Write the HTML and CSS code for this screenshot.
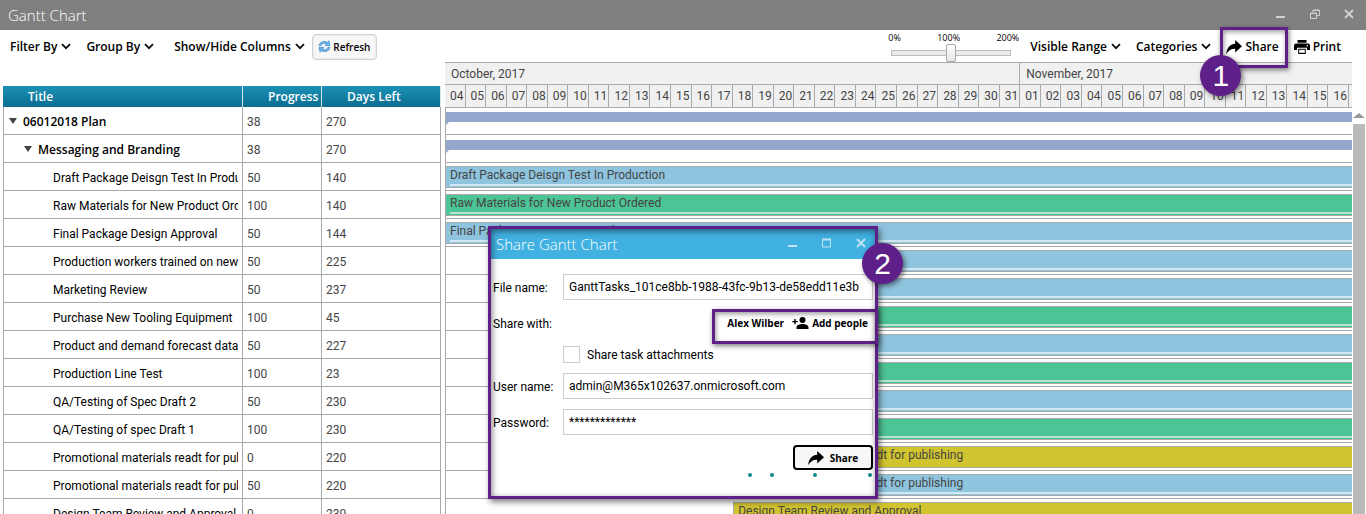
FILE: index.html
```
<!DOCTYPE html>
<html lang="en">
<head>
<meta charset="utf-8">
<title>Gantt Chart</title>
<link rel="stylesheet" href="styles.css">
</head>
<body>
<svg class="defs" aria-hidden="true">
  <symbol id="chevron" viewBox="0 0 10 7"><path d="M1 1.2l4 4 4-4" fill="none" stroke="#111" stroke-width="1.9"/></symbol>
  <symbol id="share" viewBox="0 0 16 14"><path d="M9.2 0L16 6.2 9.2 12.4V8.8C5.6 8.600 2.600 10.200 0.200 14 0.600 8.500 3.500 4.200 9.200 3.700z" fill="#000"/></symbol>
  <symbol id="close" viewBox="0 0 10 10"><path d="M1 1l8 8M9 1l-8 8" fill="none" stroke="currentColor" stroke-width="1.8"/></symbol>
</svg>
<div class="app">
  <header class="titlebar">
    <h1 class="window-title">Gantt Chart</h1>
    <div class="window-buttons">
      <button aria-label="Minimize"><svg width="10" height="10" viewBox="0 0 10 10"><path d="M0 8h9" stroke="currentColor" stroke-width="2"/></svg></button>
      <button aria-label="Restore"><svg width="10" height="10" viewBox="0 0 10 10"><path d="M3 3V1h6.500v5.500H7M.5 4h6v5.500h-6zM.5 4.500h6M3 1.500h6.500" fill="none" stroke="currentColor"/></svg></button>
      <button aria-label="Close"><svg width="10" height="10"><use href="#close"/></svg></button>
    </div>
  </header>

  <nav class="toolbar">
    <div class="tools tools-left">
      <button class="menu">Filter By <svg width="10" height="7"><use href="#chevron"/></svg></button>
      <button class="menu">Group By <svg width="10" height="7"><use href="#chevron"/></svg></button>
      <button class="menu menu-wide">Show/Hide Columns <svg width="10" height="7"><use href="#chevron"/></svg></button>
      <button class="refresh"><svg width="13" height="13" viewBox="0 0 13 13"><path d="M1 5.500C1.500 2 6 .2 9.300 2.300L11 .8l1 5-5-.3 1.600-1.500C6.500 2.600 4 3.200 3.200 5.500z" fill="#6db4ea" stroke="#2f7cc4" stroke-width=".6"/><path d="M12 7.500C11.500 11 7 12.800 3.700 10.700L2 12.200l-1-5 5 .3L4.400 9c2.100 1.400 4.600.8 5.400-1.500z" fill="#6db4ea" stroke="#2f7cc4" stroke-width=".6"/></svg>Refresh</button>
    </div>
    <div class="tools tools-right">
      <div class="zoom">
        <div class="zoom-labels"><span>0%</span><label for="zoom">100%</label><span>200%</span></div>
        <input class="zoom-range" id="zoom" type="range" min="0" max="200" value="100">
      </div>
      <button class="menu">Visible Range <svg width="10" height="7"><use href="#chevron"/></svg></button>
      <button class="menu">Categories <svg width="10" height="7"><use href="#chevron"/></svg></button>
      <button class="action"><svg width="16" height="14"><use href="#share"/></svg>Share<span class="callout callout-share"></span><span class="badge badge-one">1</span></button>
      <button class="action"><svg width="16" height="14" viewBox="0 0 16 14"><path d="M3.500 0h9v2.800h-9zM2 3.600h12a2 2 0 0 1 2 2V10h-3V7.800H3V10H0V5.600a2 2 0 0 1 2-2zM4.200 8.800h7.600V14H4.200z"/><circle cx="13.300" cy="5.700" r=".8" fill="#fff"/><path d="M5.200 9.800h5.600v3H5.200z" fill="#fff"/></svg>Print</button>
    </div>
  </nav>

  <main class="workspace">
    <section class="task-pane">
      <table class="tasks">
        <colgroup><col class="col-title"><col class="col-progress"><col></colgroup>
        <thead><tr><th>Title</th><th>Progress</th><th>Days Left</th></tr></thead>
        <tbody>
          <tr><td class="group"><div class="cell"><span class="caret"></span>06012018 Plan</div></td><td>38</td><td>270</td></tr>
          <tr><td class="group level-1"><div class="cell"><span class="caret"></span>Messaging and Branding</div></td><td>38</td><td>270</td></tr>
          <tr><td class="level-2"><div class="cell">Draft Package Deisgn Test In Production</div></td><td>50</td><td>140</td></tr>
          <tr><td class="level-2"><div class="cell">Raw Materials for New Product Ordered</div></td><td>100</td><td>140</td></tr>
          <tr><td class="level-2"><div class="cell">Final Package Design Approval</div></td><td>50</td><td>144</td></tr>
          <tr><td class="level-2"><div class="cell">Production workers trained on new tooling</div></td><td>50</td><td>225</td></tr>
          <tr><td class="level-2"><div class="cell">Marketing Review</div></td><td>50</td><td>237</td></tr>
          <tr><td class="level-2"><div class="cell">Purchase New Tooling Equipment</div></td><td>100</td><td>45</td></tr>
          <tr><td class="level-2"><div class="cell">Product and demand forecast data</div></td><td>50</td><td>227</td></tr>
          <tr><td class="level-2"><div class="cell">Production Line Test</div></td><td>100</td><td>23</td></tr>
          <tr><td class="level-2"><div class="cell">QA/Testing of Spec Draft 2</div></td><td>50</td><td>230</td></tr>
          <tr><td class="level-2"><div class="cell">QA/Testing of spec Draft 1</div></td><td>100</td><td>230</td></tr>
          <tr><td class="level-2"><div class="cell">Promotional materials readt for publishing</div></td><td>0</td><td>220</td></tr>
          <tr><td class="level-2"><div class="cell">Promotional materials readt for publishing</div></td><td>50</td><td>220</td></tr>
          <tr><td class="level-2"><div class="cell">Design Team Review and Approval</div></td><td>0</td><td>230</td></tr>
        </tbody>
      </table>
    </section>

    <section class="timeline">
      <div class="scale">
        <div class="month month-oct">October, 2017</div><div class="month month-nov">November, 2017</div>
        <span class="day">04</span><span class="day">05</span><span class="day">06</span><span class="day">07</span><span class="day">08</span><span class="day">09</span><span class="day">10</span><span class="day">11</span><span class="day">12</span><span class="day">13</span><span class="day">14</span><span class="day">15</span><span class="day">16</span><span class="day">17</span><span class="day">18</span><span class="day">19</span><span class="day">20</span><span class="day">21</span><span class="day">22</span><span class="day">23</span><span class="day">24</span><span class="day">25</span><span class="day">26</span><span class="day">27</span><span class="day">28</span><span class="day">29</span><span class="day">30</span><span class="day">31</span><span class="day">01</span><span class="day">02</span><span class="day">03</span><span class="day">04</span><span class="day">05</span><span class="day">06</span><span class="day">07</span><span class="day">08</span><span class="day">09</span><span class="day">10</span><span class="day">11</span><span class="day">12</span><span class="day">13</span><span class="day">14</span><span class="day">15</span><span class="day">16</span><span class="day day-cut"></span>
      </div>
      <div class="lanes">
        <div class="lane"><div class="summary"></div></div>
        <div class="lane"><div class="summary"></div></div>
        <div class="lane"><div class="bar blue">Draft Package Deisgn Test In Production</div></div>
        <div class="lane"><div class="bar green">Raw Materials for New Product Ordered</div></div>
        <div class="lane"><div class="bar blue">Final Package Design Approval</div></div>
        <div class="lane"><div class="bar blue" style="margin-left:12%">Production workers trained on new tooling</div></div>
        <div class="lane"><div class="bar blue" style="margin-left:12%">Marketing Review</div></div>
        <div class="lane"><div class="bar green" style="margin-left:12%">Purchase New Tooling Equipment</div></div>
        <div class="lane"><div class="bar blue" style="margin-left:12%">Product and demand forecast data</div></div>
        <div class="lane"><div class="bar green" style="margin-left:12%">Production Line Test</div></div>
        <div class="lane"><div class="bar blue" style="margin-left:12%">QA/Testing of Spec Draft 2</div></div>
        <div class="lane"><div class="bar green" style="margin-left:12%">QA/Testing of spec Draft 1</div></div>
        <div class="lane"><div class="bar yellow" style="margin-left:31.700%">Promotional materials readt for publishing</div></div>
        <div class="lane"><div class="bar blue" style="margin-left:31.700%">Promotional materials readt for publishing</div></div>
        <div class="lane"><div class="bar yellow" style="margin-left:31.700%">Design Team Review and Approval</div></div>
      </div>
    </section>
    <div class="scrollbar"><span class="scroll-up"></span><span class="scroll-thumb"></span></div>
  </main>

  <div class="dialog" role="dialog" aria-labelledby="dialog-title">
    <header class="dialog-head">
      <h2 class="dialog-title" id="dialog-title">Share Gantt Chart</h2>
      <div class="dialog-buttons">
        <button aria-label="Minimize"><svg width="10" height="10" viewBox="0 0 10 10"><path d="M0 8h9" stroke="currentColor" stroke-width="2"/></svg></button>
        <button aria-label="Maximize"><svg width="10" height="10" viewBox="0 0 10 10"><path d="M.5 1.500h8v7.500h-8z" fill="none" stroke="currentColor"/><path d="M0 1.500h9" stroke="currentColor" stroke-width="2"/></svg></button>
        <button aria-label="Close"><svg width="10" height="10"><use href="#close"/></svg></button>
      </div>
    </header>
    <form class="share-form">
      <label class="caption" for="file">File name:</label>
      <input class="field" id="file" type="text" value="GanttTasks_101ce8bb-1988-43fc-9b13-de58edd11e3b">
      <span class="caption">Share with:</span>
      <div class="people">
        <button type="button" class="person">Alex Wilber</button>
        <button type="button" class="person"><svg width="17" height="12" viewBox="0 0 17 12"><circle cx="10.500" cy="3" r="3"/><path d="M4.500 12V10.200C4.500 8 8 7 10.500 7s6 1 6 3.200V12zM2.300 2h1.400v2h2v1.300h-2v2H2.300v-2h-2V4h2z"/></svg>Add people</button>
      </div>
      <div class="attach"><input class="tick" id="attach" type="checkbox"><label for="attach">Share task attachments</label></div>
      <label class="caption" for="user">User name:</label>
      <input class="field" id="user" type="text" value="admin@M365x102637.onmicrosoft.com">
      <label class="caption" for="pass">Password:</label>
      <input class="field" id="pass" type="text" autocomplete="off" value="*************">
      <button type="button" class="submit"><svg width="16" height="14"><use href="#share"/></svg>Share</button>
    </form>
    <div class="progress"><i style="left:67%"></i><i style="left:73%"></i><i style="left:84.200%"></i><i style="left:98.700%"></i></div>
    <span class="callout callout-people"></span>
    <span class="badge badge-two">2</span>
  </div>
</div>
</body>
</html>
```
FILE: styles.css
```
* { box-sizing: border-box; }
body { margin: 0; background: #fff; color: #000; font: 12px/16px Roboto, "Open Sans", sans-serif; }
button, input { font: inherit; color: inherit; }
button { padding: 0; border: 0; background: none; white-space: nowrap; }
.defs { position: absolute; width: 0; height: 0; }
.app { position: relative; display: flex; flex-direction: column; height: 100vh; overflow: hidden; }

.titlebar { display: flex; flex: none; align-items: center; justify-content: space-between; height: 30px; padding: 0 12px 0 8px; background: #808080; color: #fff; }
.window-title, .dialog-title { margin: 0; font-family: "Open Sans", sans-serif; font-size: 15px; font-weight: 300; line-height: 20px; }
.window-buttons, .dialog-buttons { display: flex; gap: 24px; color: #d0d0d0; }
.window-buttons button, .dialog-buttons button, .menu svg, .action svg { display: block; }

.toolbar { display: flex; flex: none; justify-content: space-between; height: 32px; padding: 0 25px 0 10px; font-family: "Open Sans", sans-serif; }
.tools { display: flex; align-items: center; padding-top: 1px; }
.menu, .action { display: flex; align-items: center; gap: 4px; font-weight: 600; }
.tools-left { gap: 15px; }
.menu-wide { margin-left: 5px; }
.refresh { display: flex; align-items: center; justify-content: center; gap: 2px; width: 65px; height: 26px; margin-left: -8px; border: 1px solid #d2d2d2; border-radius: 4px; background: #f7f7f7; font-size: 10px; font-weight: 600; box-shadow: inset 0 0 0 1px #ececec; }
.tools-right { gap: 15px; }
.action { position: relative; gap: 3px; }
.zoom { display: flex; flex-direction: column; align-self: flex-start; width: 131px; margin-right: -4px; }
.zoom-labels { display: flex; justify-content: space-between; font-size: 9px; line-height: 13px; }
.zoom-range { width: 120px; height: 18px; margin: 0 0 0 3px; appearance: none; background: none; }
.zoom-range::-webkit-slider-runnable-track { height: 6px; border: 1px solid #bcbcbc; background: #e9e9e9; }
.zoom-range::-webkit-slider-thumb { width: 10px; height: 18px; margin-top: -7px; border: 1px solid #aaa; border-radius: 2px; appearance: none; background: linear-gradient(#fff, #e6e6e6); }

.workspace { display: grid; flex: 1; grid-template-columns: 445px 1fr 14px; min-height: 0; }
.task-pane { padding: 24px 4px 0 3px; }
.tasks { width: 100%; table-layout: fixed; border-spacing: 0; }
.col-title { width: 240px; }
.col-progress { width: 79px; }
.tasks th { height: 21px; padding: 1px 0 0 25px; border-right: 1px solid #d5e6ec; background: linear-gradient(#1b91b5, #0b6d90); color: #fff; font-family: "Open Sans", sans-serif; font-weight: 600; line-height: 16px; text-align: left; }
.tasks td { height: 28px; padding: 2px 4px 0; border-right: 1px solid #a9a9a9; border-bottom: 1px solid #a9a9a9; color: #444; }
.tasks td:first-child { border-left: 1px solid #a9a9a9; color: #000; }
.cell { overflow: hidden; white-space: nowrap; }
.tasks .group { font-family: "Open Sans", sans-serif; font-weight: 600; }
.tasks .level-1 { padding-left: 19px; }
.tasks .level-2 { padding-left: 49px; }
.caret { display: inline-block; margin: 0 6px 2px 1px; border: 4px solid transparent; border-top: 6px solid #444; border-bottom: 0; }

.timeline { min-width: 0; color: #444; }
.scale { display: grid; grid-template-columns: repeat(44, 1fr) 3px; grid-template-rows: 22px 23px; border-top: 1px solid #a9a9a9; background: #f0f0f0; }
.month, .day { border-right: 1px solid #a9a9a9; border-bottom: 1px solid #a9a9a9; }
.month { padding-left: 6px; line-height: 22px; }
.month-oct { grid-column: span 28; }
.month-nov { grid-column: span 17; border-right: 0; }
.day { padding-right: 1px; line-height: 23px; text-align: right; }
.day-cut { border-right: 0; }
.lanes { margin-top: -1px; border-left: 1px solid #a9a9a9; }
.lane { height: 28px; padding-top: 3px; border-bottom: 1px solid #a9a9a9; }
.summary { height: 13px; margin-top: 2px; background: #94a8cd; clip-path: polygon(0 0, 100% 0, 100% 10px, 3px 10px, 0 100%); }
.bar { position: relative; height: 22px; padding-left: 4px; border: solid #a9a9a9; border-width: 1px 0 1px 1px; line-height: 17px; white-space: nowrap; }
.lane .bar:not([style]) { border-left: 0; }
.blue { background: #8fc4df; }
.green { background: #4dc495; }
.yellow { background: #d2c42f; }
.blue::after, .green::after { content: ""; position: absolute; right: 0; bottom: 1px; left: 4px; height: 2px; background: rgba(255, 255, 255, .6); }

.scrollbar { display: flex; flex-direction: column; align-items: center; gap: 6px; padding-top: 51px; }
.scroll-up { border: 6px solid transparent; border-top: 0; border-bottom: 5px solid #999; }
.scroll-thumb { flex: 1; width: 12px; background: #bababa; }

.callout { position: absolute; border: 3px solid #5f1f89; box-shadow: 1px 2px 5px rgba(0, 0, 0, .5), inset 1px 2px 5px rgba(0, 0, 0, .4); pointer-events: none; }
.callout-share { top: -12px; right: -9px; width: 68px; height: 41px; }
.badge { position: absolute; width: 41px; height: 41px; border-radius: 50%; background: #5f1f89; color: #fff; font: 30px/41px "Liberation Sans", Arial, sans-serif; text-align: center; box-shadow: 2px 2px 5px rgba(0, 0, 0, .5); }
.badge-one { z-index: 2; top: 16px; left: -26px; }

.dialog { position: absolute; top: 226px; left: 488px; width: 390px; height: 273px; border: 3px solid #5f1f89; background: #fff; box-shadow: 2px 3px 6px rgba(0, 0, 0, .5); }
.dialog::after { content: ""; position: absolute; inset: 0; box-shadow: inset 1px 2px 6px rgba(0, 0, 0, .5); pointer-events: none; }
.dialog-head { display: flex; align-items: center; justify-content: space-between; height: 30px; padding: 0 9px 0 5px; background: #41b1e1; color: #fff; }
.dialog-buttons { color: #bfe3f4; }
.share-form { display: grid; grid-template-columns: 70px 1fr; align-items: center; gap: 10px 0; padding: 15px 2px 0; }
.caption { padding-top: 2px; }
.field { width: 100%; height: 26px; padding: 0 5px; border: 1px solid #ccc; background: #fff; }
.people { display: flex; align-items: center; justify-content: flex-end; gap: 8px; height: 26px; padding-right: 5px; }
.person { display: flex; align-items: center; gap: 3px; font-family: "Open Sans", sans-serif; font-size: 10px; font-weight: 700; }
.attach { display: flex; grid-column: 2; align-items: center; gap: 7px; height: 17px; }
.tick { width: 17px; height: 17px; margin: 0; border: 1px solid #ccc; appearance: none; }
.submit { display: flex; grid-column: 2; align-items: center; justify-content: center; justify-self: end; gap: 6px; width: 80px; height: 25px; border: 2px solid #000; border-radius: 4px; background: #f7f7f7; font-family: "Open Sans", sans-serif; font-size: 10px; font-weight: 700; }
.progress { position: relative; height: 4px; margin: 3px 2px; }
.progress i { position: absolute; width: 4px; height: 4px; border-radius: 50%; background: #0f8a8a; }
.callout-people { top: 80px; right: -3px; width: 166px; height: 35px; }
.badge-two { z-index: 2; top: 14px; right: -28px; }
```
